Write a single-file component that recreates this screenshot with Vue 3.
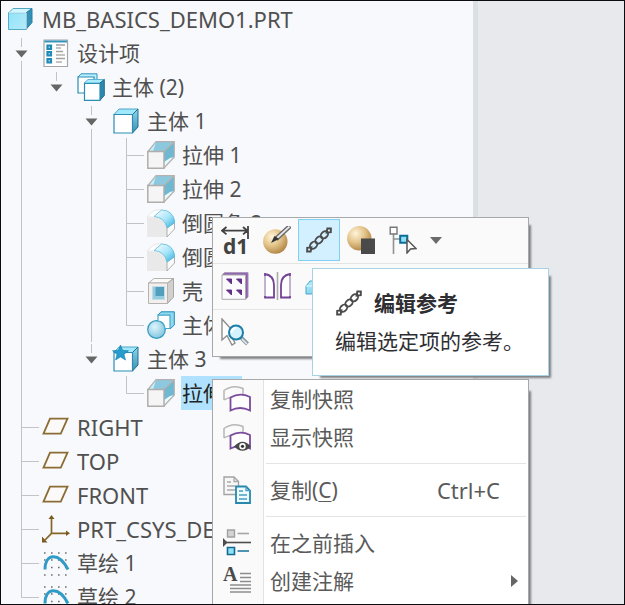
<template>
  <div class="app-window">
    <!-- 图标定义 -->
    <svg class="sprite" width="0" height="0" aria-hidden="true">
      <defs>
        <linearGradient id="g-blue" x1="0" y1="0" x2="1" y2="1">
          <stop offset="0" stop-color="#b9f1ff" />
          <stop offset="1" stop-color="#62c0de" />
        </linearGradient>
        <linearGradient id="g-face" x1="0" y1="0" x2="1" y2="1">
          <stop offset="0" stop-color="#8fe3fa" />
          <stop offset="1" stop-color="#b5ebf8" />
        </linearGradient>
        <linearGradient id="g-side" x1="0" y1="0" x2="0" y2="1">
          <stop offset="0" stop-color="#8fd6ec" />
          <stop offset="1" stop-color="#3a8fb2" />
        </linearGradient>
        <linearGradient id="g-round" x1="0" y1="0" x2="1" y2="1">
          <stop offset="0" stop-color="#ffffff" />
          <stop offset="0.55" stop-color="#a5e4fa" />
          <stop offset="1" stop-color="#2da9d6" />
        </linearGradient>
        <radialGradient id="g-gold" cx="0.35" cy="0.3" r="0.75">
          <stop offset="0" stop-color="#fff4da" />
          <stop offset="0.5" stop-color="#e3c48a" />
          <stop offset="1" stop-color="#b08343" />
        </radialGradient>
        <radialGradient id="g-ball" cx="0.4" cy="0.35" r="0.7">
          <stop offset="0" stop-color="#dff5fc" />
          <stop offset="1" stop-color="#7dc3de" />
        </radialGradient>
      </defs>

      <symbol id="part" viewBox="0 0 28 28">
        <path d="M1.500 8 6 3.500H25L19 8z" fill="#d2f6ff" stroke="#4fa6c4" />
        <path d="M19 8 25 3.500V17.500L19 24.500z" fill="#3590b3" stroke="#2a7fa3" />
        <path d="M1.500 8H19V24.500H1.500z" fill="url(#g-face)" stroke="#55aac8" />
        <path d="M2 7.800H19V24" fill="none" stroke="#e6fbff" />
      </symbol>

      <symbol id="list" viewBox="0 0 28 28">
        <path d="M2 1H25.500V27.500H2z" fill="#fff" stroke="#a6a6a6" stroke-width="1.200" />
        <path d="M2.500 2.500H25" stroke="#3596bd" stroke-width="2" />
        <path d="M5.500 6.500h3.500v3.500h-3.500zM5.500 13h3.500v3.500h-3.500zM5.500 20h3.500v3.500h-3.500z" fill="#9cdcf3" stroke="#2089b5" stroke-width="2.200" />
        <path d="M14 6H23M14 12.500H21M14 19.500H23" stroke="#a0a0a0" stroke-width="1.500" />
        <path d="M14 9H19M14 16H23M14 23H20" stroke="#b0b0b0" stroke-width="1.500" />
      </symbol>

      <symbol id="bodies" viewBox="0 0 28 28">
        <path d="M1 4 4 .8H20V16L17 20z" fill="#b6efff" stroke="#3192b8" />
        <path d="M1 4H17V20H1z" fill="#fff" stroke="#2b8db5" stroke-width="1.200" />
        <path d="M7 10 11 6.500H27.300L23 10z" fill="#a9ebff" stroke="#60b6d2" />
        <path d="M23 10 27.300 6.500V22.500L23 27.300z" fill="#2e88ab" stroke="#206f91" />
        <path d="M7.500 10.500H23V27.300H7.500z" fill="#fff" stroke="#2b8db5" stroke-width="1.200" />
      </symbol>

      <symbol id="body" viewBox="0 0 28 28">
        <path d="M2 7.500 7 2H26L20.500 7.500z" fill="#a2e8fc" stroke="#4fa6c4" />
        <path d="M20.500 7.500 26 2V20L20.500 26z" fill="url(#g-side)" stroke="#206f91" />
        <path d="M2 7.500H20.500V26H2z" fill="#fff" stroke="#2b8db5" stroke-width="1.200" />
      </symbol>

      <symbol id="extrude" viewBox="0 0 28 28">
        <path d="M1 10.500 9 1H27V16L17 27H1z" fill="#dff6fd" />
        <path d="M1 10.500 9 1V10.500z" fill="#c6effa" />
        <path d="M9 1H27L18 10.500H6z" fill="#8cc9df" />
        <path d="M17 10.500 27 1V17L17 22z" fill="#6fb8d2" />
        <path d="M17 21 23 17 27 16 17 27z" fill="#e6f9fd" />
        <path d="M1 10.500 9 .7H27.300V16L17 27M17 10.500 27 1" fill="none" stroke="#b4b1ae" stroke-width="1.200" />
        <path d="M.8 10.500H17V27.200H.8z" fill="#f5f5f5" stroke="#b0adaa" stroke-width="1.500" />
      </symbol>

      <symbol id="round" viewBox="0 0 28 28">
        <path d="M0 8 7 1.500 15 .5 8 8z" fill="#fff" stroke="#d6d6d6" stroke-width=".6" />
        <path d="M0 8.500H7Q18 9 20 19V28H0z" fill="#e9e9e9" />
        <path d="M20 19 27.500 13.500V20L20 28z" fill="#fafafa" stroke="#9d9d9d" stroke-width=".8" />
        <path d="M7 7.500 14.500 1Q26 1 28 13.500L20 19Q18 8.500 7 7.500z" fill="url(#g-round)" stroke="#5bbada" stroke-width=".8" />
      </symbol>

      <symbol id="shell" viewBox="0 0 28 28">
        <path d="M1.500 6 7 1.500H26.500L20.500 6z" fill="#fafafa" stroke="#b5b2af" />
        <path d="M20.500 6 26.500 1.500V20L20.500 26.500z" fill="#d1d0cf" stroke="#a9a6a3" />
        <path d="M1.500 6H20.500V26.500H1.500z" fill="#f1f0ef" stroke="#b5b2af" />
        <path d="M5.500 9.500H17.500V22.500H5.500z" fill="#94cde1" stroke="#c5dce4" />
        <path d="M8.500 10V19H17V10z" fill="#519fbd" />
      </symbol>

      <symbol id="merge" viewBox="0 0 28 28">
        <path d="M11 4 14 .8H27.300V14L23 18z" fill="#8cd9f2" stroke="#248ab3" />
        <circle cx="9.500" cy="18.500" r="8.800" fill="url(#g-ball)" stroke="#3198bf" stroke-width="1.200" />
        <path d="M11 4.200H23V17.500H18Q17 10 11 10z" fill="#fff" stroke="#49a7c9" stroke-width="1.200" />
      </symbol>

      <symbol id="body-active" viewBox="0 0 28 28">
        <use href="#body" />
        <path d="M8.500 0 10.600 5.300 16.500 5.700 12 9.400 13.500 15 8.500 12 3.500 15 5 9.400 .5 5.700 6.400 5.300z" fill="#269ccc" stroke="#1b7faa" stroke-width=".6" />
      </symbol>

      <symbol id="plane" viewBox="0 0 28 28">
        <path d="M8 5.700H25.500L18.800 20.600H1.500z" fill="#fbfaf8" stroke="#8a6c34" stroke-width="1.800" />
      </symbol>

      <symbol id="csys" viewBox="0 0 28 28">
        <path d="M9.500 3V18.300H25M9.500 18.300 3 25" fill="none" stroke="#866628" stroke-width="1.700" />
        <path d="M9.500 0 12.500 4H6.500zM28 18.300 24 15.500V21zM0 27.500V21.500L5.500 27.500z" fill="#7b5b20" />
      </symbol>

      <symbol id="sketch" viewBox="0 0 28 28">
        <path d="M2 4h24M2 11h24M2 18.500h24M2 26h24" stroke="#6f6f6f" stroke-width="1.600" stroke-dasharray="1.600 5.400" />
        <path d="M3 20.500C3 4 17 3 26 20.500" fill="none" stroke="#319bc7" stroke-width="3" />
      </symbol>

      <symbol id="dimension" viewBox="0 0 28 28">
        <path d="M1 4.700H26M5.500 1 1 4.700 5.500 8.400M22 1 26.500 4.700 22 8.400M27 0V13" fill="none" stroke="#424242" stroke-width="1.800" />
      </symbol>

      <symbol id="appearance" viewBox="0 0 28 28">
        <circle cx="12.300" cy="15.500" r="12.200" fill="url(#g-gold)" />
        <path d="M27 0 13 13" stroke="#666" stroke-width="4.500" />
        <path d="M26.500 .5 14 12" stroke="#e7e7e7" stroke-width="1.800" />
        <path d="M16 13 11.500 10 8 17z" fill="#333" />
      </symbol>

      <symbol id="chain" viewBox="0 0 28 28">
        <g transform="rotate(-44 14 14)" fill="none" stroke="#4b4b4b" stroke-width="1.900">
          <ellipse cx="6.500" cy="14" rx="4.200" ry="3" />
          <ellipse cx="14" cy="14" rx="4.200" ry="3" />
          <ellipse cx="21.500" cy="14" rx="4.200" ry="3" />
          <path d="M-2.500 14 0 11.500 3.500 14 0 16.500zM30.500 14 28 11.500 24.500 14 28 16.500z" />
        </g>
      </symbol>

      <symbol id="material" viewBox="0 0 28 28">
        <circle cx="12.300" cy="12.300" r="12.200" fill="url(#g-gold)" />
        <path d="M14 12.500H28V28H14z" fill="#4a4a4a" />
      </symbol>

      <symbol id="select-tree" viewBox="0 0 28 28">
        <path d="M4.500 8V28M4.500 13H11" stroke="#929292" stroke-width="1.600" />
        <path d="M1.200 1.200H8V8H1.200z" fill="#fff" stroke="#777" stroke-width="1.400" />
        <path d="M11.200 9.700H18.300V16.800H11.200z" fill="#8fe1fa" stroke="#0e6d96" stroke-width="2" />
        <path d="M18 13.500V27L21.500 23 27 22.500z" fill="#fff" stroke="#555" stroke-width="1.500" />
      </symbol>

      <symbol id="pattern" viewBox="0 0 28 28">
        <path d="M1 3 3.500 .7H27V25L24.500 27.300z" fill="#8d5fae" stroke="#a38eb3" />
        <path d="M1 3H24.500V27.300H1z" fill="#fbfafc" stroke="#aaa" />
        <path d="M5.500 7h5v5zM15.500 7h5v5zM5.500 18h5v5zM15.500 18h5v5z" fill="#623088" stroke="#623088" />
      </symbol>

      <symbol id="mirror" viewBox="0 0 28 28">
        <path d="M14.500 0V28" stroke="#aaa" stroke-width="1.600" />
        <path d="M2 2C8 3 11 6 11 13V25.500H2z" fill="#fff" stroke="#734395" stroke-width="1.800" />
        <path d="M27 2C21 3 18 6 18 13V25.500H27z" fill="#fff" stroke="#734395" stroke-width="1.800" />
        <path d="M2 4V24M27 4V24" stroke="#c9bdd3" stroke-width="1.800" />
      </symbol>

      <symbol id="flatten" viewBox="0 0 28 28">
        <path d="M1 14 5 9H27V17L22 22H1z" fill="url(#g-blue)" stroke="#49a8c9" />
        <path d="M1 14H22V22M22 14 27 9" fill="none" stroke="#dffaff" />
      </symbol>

      <symbol id="inspect" viewBox="0 0 28 28">
        <path d="M1 1V22L6 17.500 11 27 14 25 9.500 16.500H15z" fill="#fff" stroke="#8d8d8d" stroke-width="1.400" />
        <path d="M20 19.500 26.500 26" stroke="#8b9ba3" stroke-width="4" />
        <path d="M21 21 26 26" stroke="#e5eff3" stroke-width="1.500" />
        <circle cx="15" cy="14.500" r="7" fill="#d4f3fc" stroke="#1d7fa8" stroke-width="2" />
        <path d="M10.500 14.500A5 5 0 0 1 15 10" fill="none" stroke="#fff" stroke-width="2" />
      </symbol>

      <symbol id="snapshot" viewBox="0 0 28 28">
        <path d="M1 15V5.500Q10-1 20 3.500V9M1 15Q4 13 8 12.500" fill="none" stroke="#b6b6b6" stroke-width="1.500" />
        <path d="M7.500 12.500Q17 7 27 12V25.500Q17 20.500 7.500 25.500z" fill="#fff" stroke="#7b4b9e" stroke-width="1.800" />
      </symbol>

      <symbol id="snapshot-show" viewBox="0 0 28 28">
        <use href="#snapshot" />
        <path d="M11 23.500Q19.500 14 28 23.500Q19.500 32 11 23.500z" fill="#494949" />
        <circle cx="19.500" cy="23.300" r="3.200" fill="#fff" />
        <circle cx="19.500" cy="23.300" r="1.600" fill="#333" />
      </symbol>

      <symbol id="copy" viewBox="0 0 28 28">
        <path d="M1 1H11L15.500 5.500V18.500H1z" fill="#f7f7f7" stroke="#a3a3a3" stroke-width="1.400" />
        <path d="M11 1V5.500H15.500M4 6H8M4 10H12M4 14H12" fill="none" stroke="#aaa" stroke-width="1.300" />
        <path d="M13 10.500H23L27 14.500V27H13z" fill="#eefbff" stroke="#2787ad" stroke-width="1.800" />
        <path d="M23 10.500V14.500H27M16 15H20M16 19H24M16 23H24" fill="none" stroke="#4b9fbe" stroke-width="1.300" />
      </symbol>

      <symbol id="insert" viewBox="0 0 28 28">
        <path d="M4.500 1H11.500V8H4.500z" fill="#d3d3d3" stroke="#a1a1a1" stroke-width="1.400" />
        <path d="M14.500 4.500H26" stroke="#a6a6a6" stroke-width="1.600" />
        <path d="M0 13.500H28" stroke="#4d4d4d" stroke-width="1.600" />
        <path d="M0 9 4.500 13.500 0 18z" fill="#4d4d4d" />
        <path d="M4.500 18.500H11.500V25.500H4.500z" fill="#8ee3fb" stroke="#14698f" stroke-width="1.600" />
        <path d="M14.500 22H26" stroke="#3a88a8" stroke-width="1.800" />
      </symbol>

      <symbol id="note" viewBox="0 0 28 28">
        <path d="M17 6.500H28M17 10.500H28M17 14.500H28M7 18H28M7 21.500H28M7 25H28" stroke="#8d8d8d" stroke-width="1.500" />
      </symbol>
    </svg>

    <!-- 模型树 -->
    <nav class="model-tree">
      <ul role="tree">
        <li v-for="row in rows" :key="row.id" class="tree-row" role="treeitem">
          <template v-for="(guide, index) in row.guides" :key="index">
            <button
              v-if="guide === 'toggle' || guide === 'toggle-last'"
              class="guide"
              :aria-label="row.node.label"
              @click="toggle(row.id)"
            >
              <svg width="35" height="34" viewBox="0 0 35 34">
                <path d="M14.5 2V11" class="wire" />
                <path v-if="guide === 'toggle'" d="M14.5 25V34" class="wire" />
                <path d="M8.500 14.500H20.500L14.500 21.500z" fill="#666" />
              </svg>
            </button>
            <span v-else class="guide">
              <svg width="35" height="34" viewBox="0 0 35 34">
                <path :d="wires[guide]" class="wire" />
              </svg>
            </span>
          </template>
          <svg class="icon"><use :href="'#' + row.node.icon" /></svg>
          <span
            class="node-label"
            :class="{ selected: selectedId === row.id, latin: row.node.latin }"
            @click="selectedId = row.id"
          >{{ row.node.label }}</span>
        </li>
      </ul>
    </nav>
    <main class="workspace"></main>

    <!-- 浮动工具栏 -->
    <div class="mini-toolbar" role="toolbar">
      <div v-for="(group, index) in toolGroups" :key="index" class="tool-row">
        <button
          v-for="tool in group"
          :key="tool.icon"
          class="tool-button"
          :class="{ active: activeTool === tool.icon }"
          :aria-label="tool.label"
          @click="activeTool = tool.icon"
        >
          <svg class="icon">
            <use :href="'#' + tool.icon" />
            <text v-if="tool.glyph" x="2" y="28" class="glyph-sans">{{ tool.glyph }}</text>
          </svg>
        </button>
        <button v-if="index === 0" class="more-button" aria-label="更多">
          <svg width="12" height="7" viewBox="0 0 12 7"><path d="M0 0H12L6 7z" fill="#6b6b6b" /></svg>
        </button>
      </div>
    </div>

    <!-- 右键菜单 -->
    <div class="context-menu" role="menu">
      <template v-for="item in menuItems" :key="item.label">
        <hr v-if="item.divided" class="menu-divider" />
        <button class="menu-item" role="menuitem">
          <span class="menu-icon">
            <svg class="icon">
              <use :href="'#' + item.icon" />
              <text v-if="item.glyph" x="0" y="14" class="glyph-serif">{{ item.glyph }}</text>
            </svg>
          </span>
          <span class="menu-label">{{ item.label }}<template v-if="item.key">(<u>{{ item.key }}</u>)</template></span>
          <kbd v-if="item.shortcut" class="latin">{{ item.shortcut }}</kbd>
          <svg v-if="item.submenu" class="submenu-arrow" width="7" height="12" viewBox="0 0 7 12">
            <path d="M0 0V12L7 6z" fill="#666" />
          </svg>
        </button>
      </template>
    </div>

    <!-- 提示框 -->
    <div class="tooltip" role="tooltip">
      <div class="tooltip-header">
        <svg class="icon"><use href="#chain" /></svg>
        <strong>编辑参考</strong>
      </div>
      <p>编辑选定项的参考。</p>
    </div>
  </div>
</template>

<script setup>
import { ref, computed } from 'vue'

const selectedId = ref('0-0-0-1-0')
const activeTool = ref('chain')
const collapsed = ref([])

const model = {
  label: 'MB_BASICS_DEMO1.PRT',
  icon: 'part',
  latin: true,
  children: [
    {
      label: '设计项',
      icon: 'list',
      children: [
        {
          label: '主体 (2)',
          icon: 'bodies',
          children: [
            {
              label: '主体 1',
              icon: 'body',
              children: [
                { label: '拉伸 1', icon: 'extrude' },
                { label: '拉伸 2', icon: 'extrude' },
                { label: '倒圆角 2', icon: 'round' },
                { label: '倒圆角 3', icon: 'round' },
                { label: '壳', icon: 'shell' },
                { label: '主体', icon: 'merge' }
              ]
            },
            {
              label: '主体 3',
              icon: 'body-active',
              children: [{ label: '拉伸 3', icon: 'extrude' }]
            }
          ]
        }
      ]
    },
    { label: 'RIGHT', icon: 'plane', latin: true },
    { label: 'TOP', icon: 'plane', latin: true },
    { label: 'FRONT', icon: 'plane', latin: true },
    { label: 'PRT_CSYS_DEF', icon: 'csys', latin: true },
    { label: '草绘 1', icon: 'sketch' },
    { label: '草绘 2', icon: 'sketch' }
  ]
}

// 连接线形状
const wires = {
  blank: '',
  line: 'M14.5 0V34',
  branch: 'M14.5 0V34M14.5 17.5H32',
  end: 'M14.5 0V17.5H32'
}

// 把树展开成行，同时计算每行前面的连接线
const flatten = (node, id, parents, own) => {
  const row = { id, node, guides: own ? [...parents, own] : parents }
  if (!node.children || collapsed.value.includes(id)) return [row]

  let inherited = parents
  if (own) {
    inherited = [...parents, own === 'toggle' ? 'line' : 'blank']
  }
  const last = node.children.length - 1
  return [
    row,
    ...node.children.flatMap((child, i) => {
      const type = child.children
        ? (i === last ? 'toggle-last' : 'toggle')
        : (i === last ? 'end' : 'branch')
      return flatten(child, `${id}-${i}`, inherited, type)
    })
  ]
}

const rows = computed(() => flatten(model, '0', [], null))

const toggle = (id) => {
  if (collapsed.value.includes(id)) {
    collapsed.value = collapsed.value.filter((item) => item !== id)
  } else {
    collapsed.value.push(id)
  }
}

const toolGroups = [
  [
    { icon: 'dimension', label: '编辑尺寸', glyph: 'd1' },
    { icon: 'appearance', label: '编辑定义' },
    { icon: 'chain', label: '编辑参考' },
    { icon: 'material', label: '外观' },
    { icon: 'select-tree', label: '选择' }
  ],
  [
    { icon: 'pattern', label: '阵列' },
    { icon: 'mirror', label: '镜像' },
    { icon: 'flatten', label: '实体' }
  ],
  [{ icon: 'inspect', label: '缩放至选定项' }]
]

const menuItems = [
  { label: '复制快照', icon: 'snapshot' },
  { label: '显示快照', icon: 'snapshot-show' },
  { label: '复制', key: 'C', icon: 'copy', shortcut: 'Ctrl+C', divided: true },
  { label: '在之前插入', icon: 'insert', divided: true },
  { label: '创建注解', icon: 'note', glyph: 'A', submenu: true }
]
</script>

<style>
body {
  margin: 0;
}
</style>

<style scoped>
.app-window {
  position: relative;
  box-sizing: border-box;
  display: flex;
  height: 100vh;
  overflow: hidden;
  border: 1px solid #0c0c10;
  background: #e8e9ed;
  color: #505050;
  font-family: "Noto Sans", "Noto Sans CJK SC", sans-serif;
  font-size: 21px;
  line-height: 34px;
}

button {
  padding: 0;
  border: 0;
  background: none;
  color: inherit;
  font: inherit;
}

svg {
  display: block;
}

.sprite {
  position: absolute;
}

.icon {
  flex: none;
  width: 28px;
  height: 28px;
  overflow: visible;
}

.glyph-sans {
  font: bold 21px "Noto Sans", sans-serif;
  fill: #424242;
}

.glyph-serif {
  font: bold 20px "Liberation Serif", serif;
  fill: #4a4a4a;
}

.latin {
  font-size: 22px;
}

/* 模型树 */
.model-tree {
  flex: none;
  box-sizing: border-box;
  width: 477px;
  padding: 1px 0 0 6px;
  border-right: 5px solid #dbe1e3;
  background: #f8f9fc;
}

.model-tree ul {
  margin: 0;
  padding: 0;
  list-style: none;
}

.tree-row {
  display: flex;
  align-items: center;
  height: 34px;
  white-space: nowrap;
}

.guide {
  flex: none;
  width: 35px;
  height: 34px;
}

.wire {
  fill: none;
  stroke: #c2c3c6;
}

.node-label {
  margin-left: 6px;
  padding: 0 1px;
}

.node-label.selected {
  background: #b0e2ff;
  color: #222;
}

.workspace {
  flex: 1;
}

/* 浮动工具栏 */
.mini-toolbar {
  position: absolute;
  top: 216px;
  left: 211px;
  box-sizing: border-box;
  width: 317px;
  border: 1px solid #a6a8aa;
  background: #fafafa;
  box-shadow: 5px 5px 2px -3px #7d8083;
}

.tool-row {
  display: flex;
  box-sizing: border-box;
  height: 46px;
  padding: 1px;
  border-bottom: 1px solid #e4e4e4;
}

.tool-row:last-child {
  border-bottom: 0;
}

.tool-button {
  display: flex;
  align-items: center;
  justify-content: center;
  box-sizing: border-box;
  width: 42px;
  height: 42px;
  border: 1px solid transparent;
}

.tool-button.active {
  border-color: #80d0f5;
  background: #d2f0ff;
}

.more-button {
  display: flex;
  align-items: center;
  justify-content: center;
  width: 24px;
  height: 42px;
}

/* 右键菜单 */
.context-menu {
  position: absolute;
  top: 378px;
  left: 211px;
  box-sizing: border-box;
  width: 317px;
  padding-bottom: 8px;
  border: 1px solid #a6a8aa;
  background: linear-gradient(to right, #fafafa 50px, #e2e2e2 50px, #e2e2e2 51px, #fff 51px);
  box-shadow: 5px 9px 2px -3px #7d8083;
}

.menu-item {
  display: flex;
  align-items: center;
  width: 100%;
  height: 38px;
  color: #5a5a5a;
  text-align: left;
}

.menu-icon {
  width: 47px;
  padding-left: 10px;
}

.menu-label {
  flex: 1;
}

.menu-label u {
  text-decoration-thickness: 1px;
  text-underline-offset: 3px;
}

kbd {
  padding-right: 28px;
  font-family: inherit;
}

.submenu-arrow {
  margin-right: 10px;
}

.menu-divider {
  height: 1px;
  margin: 7px 2px 7px 53px;
  border: 0;
  background: #e4e4e4;
}

/* 提示框 */
.tooltip {
  position: absolute;
  top: 267px;
  left: 311px;
  box-sizing: border-box;
  width: 237px;
  padding: 16px 22px;
  border: 1px solid #a8d2e6;
  background: #fff;
  box-shadow: 5px 5px 2px -3px #7d8083;
  color: #2f2f33;
}

.tooltip-header {
  display: flex;
  align-items: center;
  gap: 11px;
  height: 36px;
}

.tooltip p {
  margin: 3px 0 1px;
  white-space: nowrap;
}
</style>
